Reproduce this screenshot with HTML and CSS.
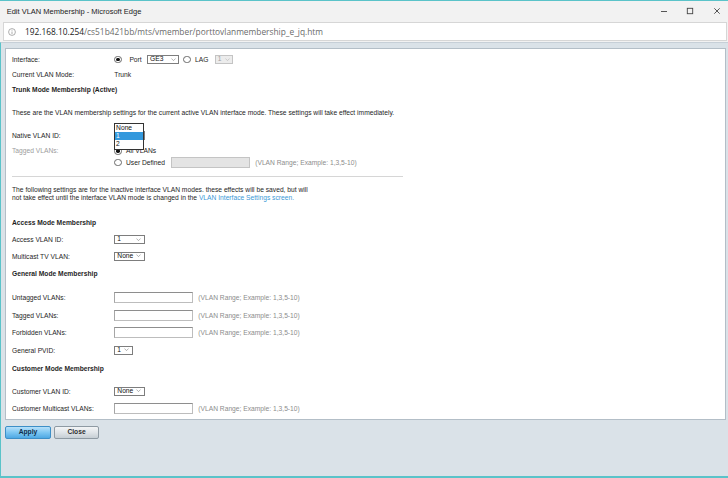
FILE: index.html
```html
<!DOCTYPE html>
<html lang="en">
<head>
<meta charset="utf-8">
<title>Edit VLAN Membership</title>
<link rel="stylesheet" href="styles.css">
</head>
<body>
<div class="window">
  <div class="titlebar">
    <span class="title">Edit VLAN Membership - Microsoft Edge</span>
    <div class="wincontrols">
      <svg class="wc" viewBox="0 0 8 8"><path d="M1 4.5H7" stroke="#444" stroke-width="0.9" fill="none"/></svg>
      <svg class="wc" viewBox="0 0 8 8"><rect x="1.3" y="1.3" width="5.4" height="5.4" stroke="#444" stroke-width="0.9" fill="none"/></svg>
      <svg class="wc" viewBox="0 0 8 8"><path d="M1.3 1.3L6.7 6.7M6.7 1.3L1.3 6.7" stroke="#444" stroke-width="0.9" fill="none"/></svg>
    </div>
  </div>
  <div class="addressbar">
    <div class="urlbox">
      <svg class="info-icon" viewBox="0 0 8 8"><circle cx="4" cy="4" r="3.4" stroke="#8a8a8a" stroke-width="0.7" fill="none"/><path d="M4 3.5V6" stroke="#8a8a8a" stroke-width="0.7"/><circle cx="4" cy="2.3" r="0.45" fill="#8a8a8a"/></svg>
      <span class="url"><span class="host">192.168.10.254</span>/cs51b421bb/mts/vmember/porttovlanmembership_e_jq.htm</span>
    </div>
  </div>
  <div class="content">
    <div class="panel">
      <div class="row first">
        <span class="label">Interface:</span>
        <span class="radio on"></span><span class="radio-text wide">Port</span>
        <span class="select w-wide"><span>GE3</span><svg class="chev" viewBox="0 0 6 4"><path d="M0.5 0.6L3 3.1L5.5 0.6" stroke="#666" stroke-width="0.6" fill="none"/></svg></span>
        <span class="radio gap-left"></span><span class="radio-text">LAG</span>
        <span class="select w-narrow disabled"><span>1</span><svg class="chev" viewBox="0 0 6 4"><path d="M0.5 0.6L3 3.1L5.5 0.6" stroke="#aaa" stroke-width="0.6" fill="none"/></svg></span>
      </div>
      <div class="row snug">
        <span class="label">Current VLAN Mode:</span>
        <span>Trunk</span>
      </div>
      <div class="heading lead">Trunk Mode Membership (Active)</div>
      <div class="note">These are the VLAN membership settings for the current active VLAN interface mode. These settings will take effect immediately.</div>
      <div class="row after-note">
        <span class="label">Native VLAN ID:</span>
        <span class="select-wrap">
          <span class="select w-std"><span>1</span><svg class="chev" viewBox="0 0 6 4"><path d="M0.5 0.6L3 3.1L5.5 0.6" stroke="#666" stroke-width="0.6" fill="none"/></svg></span>
          <span class="listbox">
            <span class="option">None</span>
            <span class="option selected">1</span>
            <span class="option">2</span>
          </span>
        </span>
      </div>
      <div class="row radio-first">
        <span class="label muted">Tagged VLANs:</span>
        <span class="radio on"></span><span class="radio-text">All VLANs</span>
      </div>
      <div class="row radio-next">
        <span class="label"></span>
        <span class="radio"></span><span class="radio-text">User Defined</span>
        <span class="input disabled w-user"></span>
        <span class="hint">(VLAN Range; Example: 1,3,5-10)</span>
      </div>
      <div class="divider"></div>
      <p class="info">The following settings are for the inactive interface VLAN modes. these effects will be saved, but will<br>not take effect until the interface VLAN mode is changed in the <a class="link" href="#">VLAN Interface Settings screen.</a></p>

      <div class="heading major">Access Mode Membership</div>
      <div class="row after-heading">
        <span class="label">Access VLAN ID:</span>
        <span class="select w-std"><span>1</span><svg class="chev" viewBox="0 0 6 4"><path d="M0.5 0.6L3 3.1L5.5 0.6" stroke="#666" stroke-width="0.6" fill="none"/></svg></span>
      </div>
      <div class="row compact">
        <span class="label">Multicast TV VLAN:</span>
        <span class="select w-std"><span>None</span><svg class="chev" viewBox="0 0 6 4"><path d="M0.5 0.6L3 3.1L5.5 0.6" stroke="#666" stroke-width="0.6" fill="none"/></svg></span>
      </div>

      <div class="heading">General Mode Membership</div>
      <div class="row spaced">
        <span class="label">Untagged VLANs:</span>
        <span class="input w-field"></span>
        <span class="hint">(VLAN Range; Example: 1,3,5-10)</span>
      </div>
      <div class="row">
        <span class="label">Tagged VLANs:</span>
        <span class="input w-field"></span>
        <span class="hint">(VLAN Range; Example: 1,3,5-10)</span>
      </div>
      <div class="row">
        <span class="label">Forbidden VLANs:</span>
        <span class="input w-field"></span>
        <span class="hint">(VLAN Range; Example: 1,3,5-10)</span>
      </div>
      <div class="row">
        <span class="label">General PVID:</span>
        <span class="select w-narrow"><span>1</span><svg class="chev" viewBox="0 0 6 4"><path d="M0.5 0.6L3 3.1L5.5 0.6" stroke="#666" stroke-width="0.6" fill="none"/></svg></span>
      </div>

      <div class="heading minor">Customer Mode Membership</div>
      <div class="row spaced-sm">
        <span class="label">Customer VLAN ID:</span>
        <span class="select w-std"><span>None</span><svg class="chev" viewBox="0 0 6 4"><path d="M0.5 0.6L3 3.1L5.5 0.6" stroke="#666" stroke-width="0.6" fill="none"/></svg></span>
      </div>
      <div class="row">
        <span class="label">Customer Multicast VLANs:</span>
        <span class="input w-field"></span>
        <span class="hint">(VLAN Range; Example: 1,3,5-10)</span>
      </div>
    </div>
    <div class="buttons">
      <button class="btn btn-apply" type="button">Apply</button>
      <button class="btn btn-close" type="button">Close</button>
    </div>
  </div>
</div>
</body>
</html>
```
FILE: styles.css
```css
* { box-sizing: border-box; }
html, body { margin: 0; padding: 0; }
body {
  width: 728px;
  height: 478px;
  overflow: hidden;
  background: #dae2e8;
  font-family: "Liberation Sans", Arial, sans-serif;
}
.window {
  display: flex;
  flex-direction: column;
  height: 478px;
  border-top: 1px solid #5ac3c9;
}
.titlebar {
  flex: none;
  height: 20px;
  display: flex;
  align-items: center;
  justify-content: space-between;
  background: #f2f2f2;
  padding: 0 7.3px 0 6.7px;
}
.title { font-size: 7.5px; color: #222; }
.wincontrols { display: flex; align-items: center; gap: 18.3px; }
.wc { display: block; width: 8px; height: 8px; }
.addressbar {
  flex: none;
  background: #f2f2f2;
  padding: 1px 1px 1px 3px;
}
.urlbox {
  height: 19px;
  background: #fff;
  border: 1px solid #d6d6d6;
  display: flex;
  align-items: center;
  padding-left: 4px;
}
.info-icon { display: block; width: 8px; height: 8px; margin-right: 9px; flex: none; }
.url { font-family: "Open Sans", "Liberation Sans", sans-serif; font-size: 8.35px; color: #6b6b6b; white-space: nowrap; }
.host { color: #1a1a1a; }
.content {
  flex: 1;
  border-top: 1px solid #c6cfd7;
  border-left: 1px solid #5ac3c9;
  border-bottom: 2px solid #5ac3c9;
  background: #dae2e8;
}
.panel {
  margin: 5px 2px 0 4px;
  background: #fff;
  border: 1px solid #b3bec7;
  padding: 5px 6px 4.8px;
  font-size: 6.7px;
  color: #1e1e1e;
}
.row {
  display: flex;
  align-items: center;
  height: 11px;
  margin-top: 6.5px;
  white-space: nowrap;
}
.row.first { margin-top: 0; }
.row.snug { margin-top: 3.5px; }
.row.after-note { margin-top: 11.5px; }
.row.radio-first { margin-top: 4.5px; }
.row.radio-next { margin-top: 0.3px; }
.row.after-heading { margin-top: 6px; }
.row.compact { margin-top: 5.5px; }
.row.spaced { margin-top: 13px; }
.row.spaced-sm { margin-top: 12px; }
.label { width: 102.3px; flex: none; }
.muted { color: #9c9c9c; }
.heading {
  height: 11px;
  line-height: 11px;
  margin-top: 6.5px;
  font-weight: bold;
  white-space: nowrap;
}
.heading.lead { margin-top: 4.3px; }
.heading.major { margin-top: 15.2px; }
.heading.minor { margin-top: 7px; }
.note { height: 11px; line-height: 11px; margin-top: 12.7px; white-space: nowrap; }
.divider { height: 1px; width: 391px; background: #d6d6d6; margin-top: 7.9px; }
.info { margin: 9.3px 0 0; line-height: 8px; white-space: nowrap; }
.link { color: #3b99d6; text-decoration: none; }

.radio {
  flex: none;
  width: 7.4px;
  height: 7.4px;
  border: 0.8px solid #6a6a6a;
  border-radius: 50%;
  background: #fff;
  display: flex;
  align-items: center;
  justify-content: center;
}
.radio.on::after {
  content: "";
  width: 3.4px;
  height: 3.4px;
  border-radius: 50%;
  background: #111;
}
.radio.gap-left { margin-left: 4px; }
.radio-text { margin-left: 4.3px; margin-right: 6.3px; }
.radio-text.wide { margin-left: 7.7px; margin-right: 5.4px; }

.select {
  flex: none;
  display: inline-flex;
  align-items: center;
  justify-content: space-between;
  height: 9px;
  border: 0.8px solid #7d7d7d;
  background: #fff;
  padding: 0 2.5px 0 2px;
  color: #111;
  line-height: 1;
}
.select.disabled { background: #ececec; border-color: #c4c4c4; color: #a0a0a0; }
.w-wide { width: 32.3px; }
.w-std { width: 30.7px; }
.w-narrow { width: 18.3px; }
.chev { display: block; width: 5px; height: 3.4px; }
.select-wrap { position: relative; display: inline-flex; }
.listbox {
  position: absolute;
  left: 0;
  top: -8.3px;
  width: 29.7px;
  border: 1px solid #333;
  background: #fff;
  display: flex;
  flex-direction: column;
  z-index: 2;
}
.option { height: 8.3px; line-height: 8.3px; padding-left: 0.8px; color: #111; }
.option.selected { background: #3399dd; color: #fff; }

.input {
  flex: none;
  height: 11px;
  border: 1px solid #bdbdbd;
  border-top-color: #8e8e8e;
  border-left-color: #a6a6a6;
  background: #fff;
}
.input.disabled { background: #e4e4e4; border-color: #c4c4c4; height: 10.6px; }
.w-field { width: 78.4px; }
.w-user { width: 78.3px; }
.hint { margin-left: 5.6px; color: #8c8c8c; }

.buttons { display: flex; gap: 3px; padding: 6px 0 0 4px; }
.btn {
  height: 13px;
  padding: 0;
  font-family: "Liberation Sans", Arial, sans-serif;
  font-size: 6.7px;
  font-weight: bold;
  border-radius: 2px;
  line-height: 1;
}
.btn-apply {
  width: 46px;
  color: #0f2e4a;
  border: 1px solid #3d8fc7;
  background: linear-gradient(#b6e0fa, #7cc6f2 50%, #4ea8e4);
}
.btn-close {
  width: 45px;
  color: #2e2e2e;
  border: 1px solid #8e9aa3;
  background: linear-gradient(#f3f5f6, #dfe4e8 50%, #c6ced4);
}
```
